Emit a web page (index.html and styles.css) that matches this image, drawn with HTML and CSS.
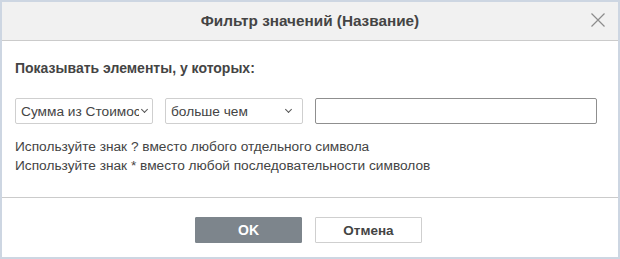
FILE: index.html
```html
<!DOCTYPE html>
<html lang="ru">
<head>
    <meta charset="UTF-8">
    <title>Фильтр значений</title>
    <link rel="stylesheet" href="styles.css">
</head>
<body>
    <div class="dialog">
        <div class="dialog-header">
            <span class="dialog-title">Фильтр значений (Название)</span>
            <span class="dialog-close">
                <svg width="16" height="16" viewBox="0 0 16 16">
                    <path d="M1.5 1.5 L14.5 14.5 M14.5 1.5 L1.5 14.5" stroke="#8c8c8c" stroke-width="1.2" fill="none"/>
                </svg>
            </span>
        </div>

        <div class="dialog-body">
            <div class="label">Показывать элементы, у которых:</div>
            <div class="row">
                <div class="combo combo-field">
                    <span class="combo-text">Сумма из Стоимости</span>
                    <span class="caret"></span>
                </div>
                <div class="combo combo-cond">
                    <span class="combo-text">больше чем</span>
                    <span class="caret"></span>
                </div>
                <input class="value-input" type="text">
            </div>
            <div class="hint">
                <div>Используйте знак ? вместо любого отдельного символа</div>
                <div>Используйте знак * вместо любой последовательности символов</div>
            </div>
        </div>

        <div class="dialog-footer">
            <button class="btn btn-primary">OK</button>
            <button class="btn">Отмена</button>
        </div>
    </div>
</body>
</html>
```

FILE: styles.css
```css
body {
    margin: 0;
    font-family: "Liberation Sans", Arial, sans-serif;
    color: #444;
    background-color: #fff;
}

.dialog {
    width: 620px;
    height: 259px;
    box-sizing: border-box;
    border: 2px solid #cdd6e2;
    display: flex;
    flex-direction: column;
    background-color: #fff;
}

.dialog-header {
    height: 38px;
    flex-shrink: 0;
    background-color: #f1f1f1;
    border-bottom: 1px solid #cbcbcb;
    display: flex;
    align-items: center;
    justify-content: center;
    position: relative;
}

.dialog-title {
    font-size: 15.3px;
    font-weight: bold;
    color: #444;
}

.dialog-close {
    position: absolute;
    right: 12px;
    top: 10px;
    width: 16px;
    height: 16px;
}

.dialog-close svg {
    display: block;
}

.dialog-body {
    flex: 1;
    padding: 19px 13px 0;
}

.label {
    font-size: 14px;
    font-weight: bold;
    line-height: 16px;
}

.row {
    display: flex;
    gap: 12px;
    margin-top: 22px;
}

.combo {
    height: 26px;
    box-sizing: border-box;
    border: 1px solid #cfcfcf;
    border-radius: 2px;
    display: flex;
    align-items: center;
    padding: 0 10px 0 5px;
    font-size: 13.7px;
    background-color: #fff;
}

.combo-field {
    width: 138px;
    padding-right: 4px;
}

.combo-cond {
    width: 138px;
}

.combo-text {
    flex: 1;
    white-space: nowrap;
    overflow: hidden;
}

.caret {
    width: 4px;
    height: 4px;
    border-right: 1px solid #555;
    border-bottom: 1px solid #555;
    transform: rotate(45deg);
    margin: 0 1px 3px 3px;
}

.value-input {
    width: 282px;
    height: 26px;
    box-sizing: border-box;
    border: 1px solid #8f8f8f;
    border-radius: 2px;
    margin: 0;
    padding: 0 5px;
    font: inherit;
}

.hint {
    margin-top: 13px;
    font-size: 13.7px;
    line-height: 19px;
}

.dialog-footer {
    border-top: 1px solid #cbcbcb;
    display: flex;
    justify-content: center;
    gap: 13px;
    padding: 19px 3px 0 0;
    height: 60px;
    flex-shrink: 0;
    box-sizing: border-box;
}

.btn {
    width: 107px;
    height: 26px;
    border: 1px solid #cfcfcf;
    border-radius: 1px;
    background-color: #fff;
    color: #444;
    font-family: inherit;
    font-size: 13.5px;
    font-weight: bold;
    padding: 0;
}

.btn-primary {
    background-color: #7d858c;
    border-color: #7d858c;
    color: #fff;
    font-size: 14px;
}
```
